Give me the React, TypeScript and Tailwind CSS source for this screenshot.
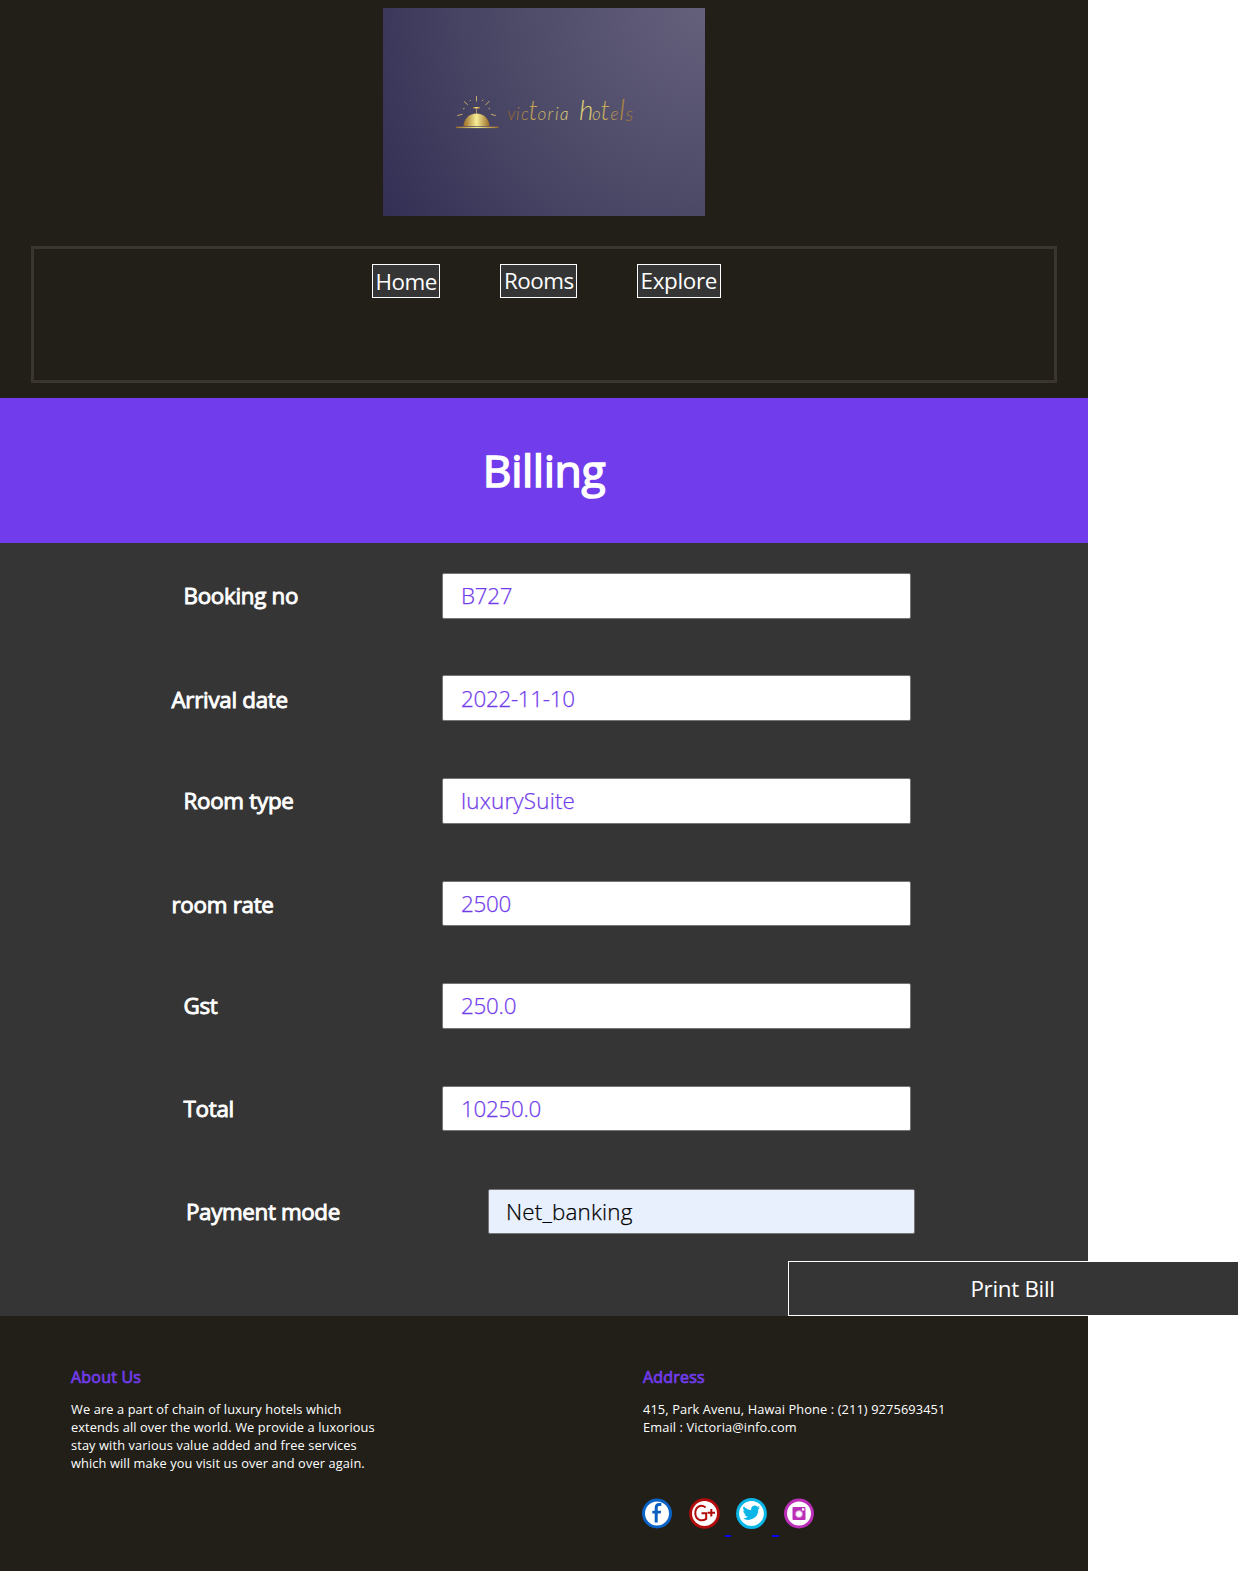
const rows = [
  { label: "Booking no", value: "B727", pad: "pl-[183.5px]", shift: "pt-[8px]", h: "h-[102px]", ih: "h-[46px] pb-[2px] tracking-[-0.25px]" },
  { label: "Arrival date", value: "2022-11-10", pad: "pl-[171.5px]", shift: "pt-[10px]", h: "h-[103px]", ih: "h-[46px] tracking-[-0.3px]" },
  { label: "Room type", value: "luxurySuite", pad: "pl-[183.5px]", shift: "pt-[8px]", h: "h-[103px]", ih: "h-[46px] pb-[2px] tracking-[0.2px]" },
  { label: "room rate", value: "2500", pad: "pl-[171.5px]", shift: "pt-[9px]", h: "h-[102px]", ih: "h-[45px] tracking-[-0.3px]" },
  { label: "Gst", value: "250.0", pad: "pl-[183.5px]", shift: "pt-[8px]", h: "h-[103px]", ih: "h-[46px] pb-[2px] tracking-[-0.25px]" },
  { label: "Total", value: "10250.0", pad: "pl-[183.5px]", shift: "pt-[8px]", h: "h-[103px]", ih: "h-[45px] tracking-[-0.3px]" },
];

function Logo() {
  return (
    <svg width="322" height="208" viewBox="0 0 322 208" className="block">
      <defs>
        <radialGradient id="bg" gradientUnits="userSpaceOnUse" cx="322" cy="0" r="390">
          <stop offset="0" stopColor="#64607c" />
          <stop offset="0.5" stopColor="#4d4a68" />
          <stop offset="1" stopColor="#322e54" />
        </radialGradient>
        <linearGradient id="dome">
          <stop offset="0" stopColor="#9a6a28" />
          <stop offset="0.5" stopColor="#f6ee94" />
          <stop offset="1" stopColor="#9a6a28" />
        </linearGradient>
        <linearGradient id="word" gradientUnits="userSpaceOnUse" x1="124" y1="0" x2="252" y2="0">
          <stop offset="0" stopColor="#8f5f24" />
          <stop offset="0.2" stopColor="#c3a154" />
          <stop offset="0.48" stopColor="#e6dc7c" />
          <stop offset="0.65" stopColor="#dccb6c" />
          <stop offset="1" stopColor="#9a6a30" />
        </linearGradient>
      </defs>
      <rect width="322" height="208" fill="url(#bg)" />
      <path d="M80.5 118 A13 12.5 0 0 1 106.500 118 Z" fill="url(#dome)" />
      <rect x="73" y="118.700" width="42.500" height="1.400" fill="url(#dome)" />
      <rect x="90" y="99" width="7" height="1.500" fill="url(#dome)" />
      <path d="M93.500 100 V106" stroke="#a98f62" strokeWidth="1" />
      <g stroke="#d3b767" strokeWidth="0.9">
        <path d="M93.500 88 V93.500 M106.500 93 L102.500 97 M81 93.500 L84.700 96.700 M74.200 107.700 L79.500 106.200 M108 106.200 L112.800 107.700 M80 101 L81.600 100.300 M105.500 100.300 L107 101 M86.800 92 L87.800 93 M99.200 93 L100.200 91.800" />
      </g>
      <text y="112" fill="url(#word)" fontSize="17" fontStyle="italic" fontWeight="300" fontFamily="Lato, sans-serif">
        <tspan x="124.500 133 138">vic</tspan>
        <tspan x="145.500" fontSize="27">t</tspan>
        <tspan x="154.500 164.500 172 177">oria</tspan>
        <tspan> </tspan>
        <tspan x="196" fontSize="28">h</tspan>
        <tspan x="209">o</tspan>
        <tspan x="217.500" fontSize="27">t</tspan>
        <tspan x="227.500">e</tspan>
        <tspan x="236" fontSize="29">l</tspan>
        <tspan x="242.500" y="113" fontSize="20">s</tspan>
      </text>
    </svg>
  );
}

function NavLink({ children, className }: { children: string; className: string }) {
  return (
    <a className={`block h-[34px] border border-white bg-[#353535] text-[22.4px] leading-[32px] text-white ${className}`}>{children}</a>
  );
}

function Socials() {
  return (
    <div className="mt-[61px] -ml-px flex">
      <svg width="31" height="32" viewBox="0 0 31 32">
        <circle cx="15" cy="16.500" r="13.500" fill="#fff" stroke="#0a62c4" strokeWidth="3" />
        <path d="M12.700 25.500 V16.600 H10.300 V13.800 H12.700 V11 C12.700 7.700 14.300 6.100 17 6.100 H19.300 V9 H17.600 C16.300 9 15.700 9.600 15.700 11 V13.800 H19.100 L18.700 16.600 H15.700 V25.500 Z" fill="#0a5fc0" />
      </svg>
      <svg className="ml-4" width="31" height="32" viewBox="0 0 31 32">
        <circle cx="15.500" cy="16.500" r="13.900" fill="#fff" stroke="#b30c0c" strokeWidth="2.800" />
        <path d="M16.600 10.500 C11.500 6.500 6.300 10.500 6.300 16 C6.300 22.500 12.300 25 17.200 21.900 V16.200 H12.500 M18.600 15.800 H26 M22.300 12 V19.600" fill="none" stroke="#b30c0c" strokeWidth="2" />
      </svg>
      <span className="mt-[38px] ml-[5px] h-[2px] w-[6px] bg-[#0000ee]" />
      <svg className="ml-[5px]" width="31" height="32" viewBox="0 0 31 32">
        <circle cx="15.500" cy="16.500" r="13.900" fill="#fff" stroke="#0ab5e8" strokeWidth="3" />
        <path transform="translate(6.400 6.700) scale(.75)" fill="#0ab5e8" d="M23.600 4.900c-.8.400-1.800.700-2.700.800 1-.6 1.700-1.500 2.100-2.600-.9.500-1.900.9-3 1.100a4.800 4.800 0 0 0-8.200 4.400C7.800 8.400 4.200 6.500 1.800 3.500a4.800 4.800 0 0 0 1.500 6.400c-.8 0-1.500-.2-2.200-.6 0 2.300 1.600 4.300 3.900 4.800-.7.200-1.400.2-2.200.1.600 1.900 2.400 3.300 4.500 3.300A9.600 9.600 0 0 1 .2 19.500 13.600 13.600 0 0 0 21.200 7.400c.9-.7 1.800-1.500 2.400-2.500z" />
      </svg>
      <span className="mt-[38px] ml-[5px] h-[2px] w-[7px] bg-[#0000ee]" />
      <svg className="ml-[5px]" width="31" height="32" viewBox="0 0 31 32">
        <circle cx="15" cy="16.500" r="13.500" fill="#fff" stroke="#bb2eb8" strokeWidth="3" />
        <rect x="8.500" y="10" width="13" height="13" rx="1" fill="#bb2eb8" />
        <circle cx="15" cy="17" r="3.500" fill="#fff" stroke="#d77cd4" />
        <rect x="18" y="11.200" width="2.300" height="2.300" fill="#fff" />
      </svg>
    </div>
  );
}

export default function App() {
  return (
    <div className="h-[1571px] w-full overflow-hidden bg-white font-['Open_Sans',sans-serif]">
      <div className="flex h-full w-[1088px] flex-col bg-[#221f19]">
        <header className="h-[398px] shrink-0 px-[31px] pt-2">
          <div className="ml-[352px]"><Logo /></div>
          <nav className="mt-[30px] flex h-[137px] items-start border-[3px] border-[#3a362f] pt-[15px] pl-[338px]">
            <NavLink className="w-[68px] pt-px pl-[2.500px] tracking-[-0.500px]">Home</NavLink>
            <NavLink className="ml-[60px] w-[77px] pl-[3px] tracking-[-0.500px]">Rooms</NavLink>
            <NavLink className="ml-[60px] w-[84px] pl-[2.500px] tracking-[-0.300px]">Explore</NavLink>
          </nav>
        </header>
        <h1 className="flex h-[145px] shrink-0 items-center justify-center bg-[#713ceb] pb-px text-[44.500px] leading-none tracking-[-0.400px] text-white [-webkit-text-stroke:1.500px_white]">Billing</h1>
        <main className="h-[773px] shrink-0 bg-[#353535] pt-[30px]">
          {rows.map((r) => (
            <div key={r.label} className={`flex ${r.h}`}>
              <label className={`w-[442px] shrink-0 text-[22.400px] leading-[30px] tracking-[-0.3px] text-white [-webkit-text-stroke:0.900px_white] ${r.pad} ${r.shift}`}>{r.label}</label>
              <input readOnly value={r.value} className={`w-[469px] rounded-[2px] border border-[#767676] bg-white px-[18px] text-[22.400px] font-light text-[#713ceb] outline-none [-webkit-text-stroke:0.250px_#713ceb] ${r.ih}`} />
            </div>
          ))}
          <div className="flex h-[72px]">
            <label className="w-[488px] shrink-0 pt-[8px] pl-[186px] text-[22.400px] leading-[30px] tracking-[-0.380px] text-white [-webkit-text-stroke:0.900px_white]">Payment mode</label>
            <input readOnly value="Net_banking" className="h-[45px] w-[427px] rounded-[2px] border border-[#767676] bg-[#e8f0fe] px-[17px] text-[22.400px] font-light tracking-[0.2px] text-black outline-none [-webkit-text-stroke:0.250px_black]" />
          </div>
          <button className="ml-[788px] block h-[55px] w-[450px] border border-r-0 border-white bg-[#353535] pr-[2px] text-[22.400px] tracking-[-0.3px] text-white">Print Bill</button>
        </main>
        <footer className="flex pt-[49px] pl-[71px] text-[12.800px] leading-[18px] tracking-[0.115px] text-white">
          <section className="w-[572px]">
            <h2 className="mb-[11px] text-[16px] leading-[24px] tracking-[0.2px] text-[#713ceb] [-webkit-text-stroke:0.700px_#713ceb]">About Us</h2>
            <p className="w-[320px]">We are a part of chain of luxury hotels which<br />extends all over the world. We provide a luxorious<br />stay with various value added and free services<br />which will make you visit us over and over again.</p>
          </section>
          <section>
            <h2 className="mb-[11px] text-[16px] leading-[24px] tracking-[0.2px] text-[#713ceb] [-webkit-text-stroke:0.700px_#713ceb]">Address</h2>
            <p>415, Park Avenu, Hawai Phone : (211) 9275693451<br />Email : Victoria@info.com</p>
            <Socials />
          </section>
        </footer>
      </div>
    </div>
  );
}
